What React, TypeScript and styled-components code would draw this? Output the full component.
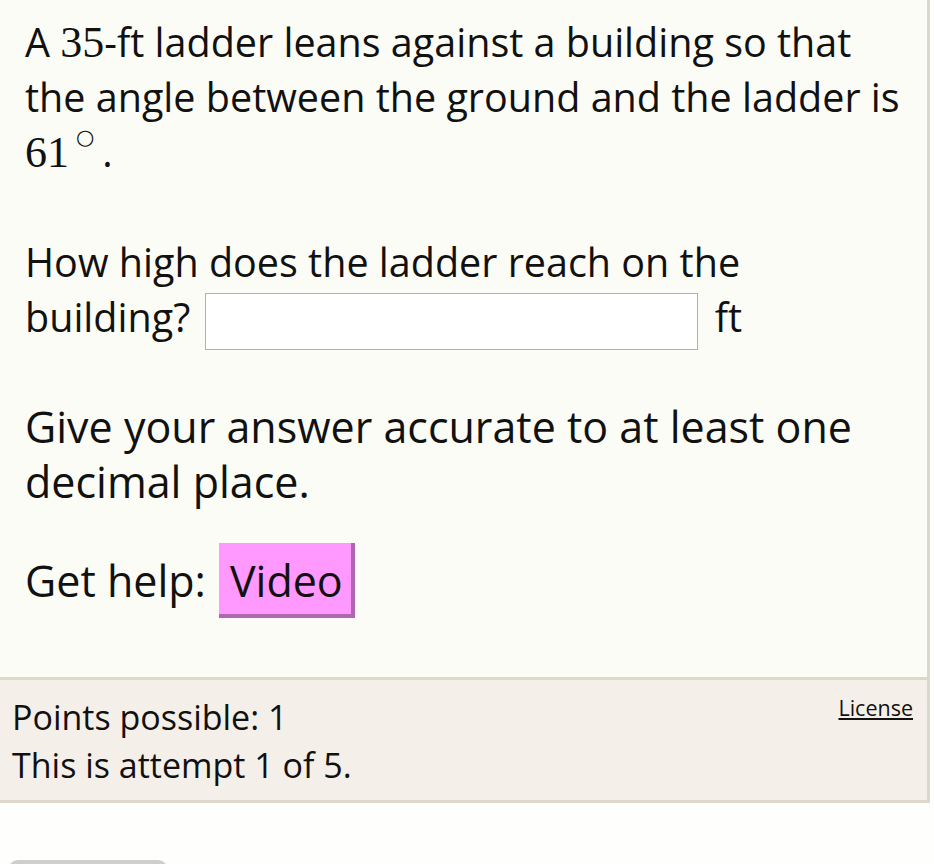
import React from 'react';
import styled, { createGlobalStyle } from 'styled-components';

const GlobalStyle = createGlobalStyle`
  html, body {
    margin: 0;
    padding: 0;
    background: #fefefc;
  }
  body {
    font-family: 'Open Sans', 'Noto Sans', sans-serif;
    color: #111;
  }
`;

const Page = styled.div`
  width: 930px;
`;

const Question = styled.div`
  background: #fcfcf6;
  border-right: 3px solid #dcd8cc;
  padding: 15px 20px 59px 25px;
  font-size: 39.5px;
  line-height: 55px;
`;

const Para = styled.p<{ $gap?: number; $big?: boolean }>`
  margin: ${(p) => p.$gap ?? 0}px 0 0;
  font-size: ${(p) => (p.$big ? '43px' : 'inherit')};
`;

const MathNum = styled.span`
  font-family: 'Liberation Serif', 'DejaVu Serif', serif;
  font-size: 44px;
  line-height: 1;
`;

const Degree = styled.span`
  font-family: 'DejaVu Sans', sans-serif;
  font-size: 21px;
  line-height: 0;
  vertical-align: 23px;
  margin: 0 8px 0 7px;
`;

const AnswerBox = styled.input`
  box-sizing: border-box;
  width: 493px;
  height: 57px;
  margin: 0 6px 0 5px;
  border: 1px solid #b0b0b0;
  background: #fff;
  vertical-align: middle;
  font: inherit;
`;

const HelpRow = styled.div`
  margin-top: 34px;
  display: flex;
  align-items: baseline;
  gap: 13px;
  font-size: 43px;
`;

const VideoButton = styled.button`
  font: inherit;
  color: #111;
  background: #ff99ff;
  border: none;
  border-right: 4px solid #b066b0;
  border-bottom: 4px solid #b066b0;
  border-radius: 0;
  padding: 10px 8px 6px 11px;
  line-height: 55px;
`;

const Footer = styled.div`
  background: #f4f0e9;
  border-top: 3px solid #dcd8cc;
  border-bottom: 3px solid #dcd8cc;
  border-right: 3px solid #dcd8cc;
  padding: 13px 14px 11px 12px;
  display: flex;
  justify-content: space-between;
  align-items: flex-start;
`;

const FooterText = styled.div`
  font-size: 34px;
  line-height: 48px;
`;

const LicenseLink = styled.a`
  font-size: 21.5px;
  line-height: 30px;
  color: #111;
  text-decoration: underline;
`;

const Below = styled.div`
  padding: 57px 0 0 8px;
`;

const GrayPill = styled.div`
  width: 160px;
  height: 20px;
  background: #cfcfcf;
  border-radius: 10px 10px 0 0;
`;

export default function App() {
  return (
    <Page>
      <GlobalStyle />
      <Question>
        <Para>
          A <MathNum>35</MathNum>-ft ladder leans against a building so that the angle between
          the ground and the ladder is <MathNum>61</MathNum>
          <Degree>○</Degree>.
        </Para>
        <Para $gap={55}>
          How high does the ladder reach on the building? <AnswerBox type="text" aria-label="answer" /> ft
        </Para>
        <Para $gap={49} $big>
          Give your answer accurate to at least one decimal place.
        </Para>
        <HelpRow>
          <span>Get help:</span>
          <VideoButton type="button">Video</VideoButton>
        </HelpRow>
      </Question>
      <Footer>
        <FooterText>
          Points possible: 1
          <br />
          This is attempt 1 of 5.
        </FooterText>
        <LicenseLink href="#">License</LicenseLink>
      </Footer>
      <Below>
        <GrayPill />
      </Below>
    </Page>
  );
}
